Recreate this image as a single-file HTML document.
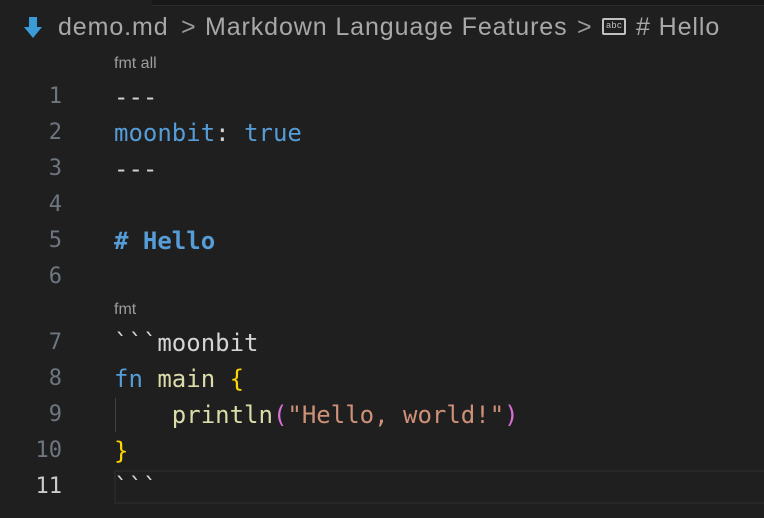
<!DOCTYPE html>
<html><head><meta charset="utf-8"><style>
html,body{margin:0;padding:0;}
body{width:764px;height:518px;background:#1f1f1f;position:relative;overflow:hidden;font-family:"Liberation Sans",sans-serif;}
.topbar{position:absolute;left:152px;top:0;width:612px;height:5px;background:#181818;border-bottom:1px solid #2b2b2b;}
.bc{position:absolute;top:12px;left:0;height:34px;font-size:25px;letter-spacing:0.9px;color:#a8a8a8;white-space:nowrap;}
.bc span{position:absolute;top:1px;}
.ln{position:absolute;left:0;width:62px;text-align:right;font-family:"DejaVu Sans Mono",monospace;font-size:22px;color:#6e7681;line-height:36px;}
.code{position:absolute;left:114px;font-family:"DejaVu Sans Mono",monospace;font-size:24px;line-height:36px;color:#d4d4d4;white-space:pre;}
.lens{position:absolute;left:114px;font-size:16px;color:#9d9d9d;}
.b{color:#569cd6}.y{color:#dcdcaa}.g{color:#ffd700}.p{color:#da70d6}.s{color:#ce9178}
</style></head><body>
<div class="topbar"></div>
<div class="bc">
<svg style="position:absolute;left:23px;top:4px" width="20" height="24" viewBox="0 0 20 24"><path d="M6 1h8v10h5l-9 11-9-11h5z" fill="#3b9bd9"/></svg>
<span style="left:58px">demo.md</span>
<span style="left:181px;color:#9a9a9a">&gt;</span>
<span style="left:205px">Markdown Language Features</span>
<span style="left:577px;color:#9a9a9a">&gt;</span>
<div style="position:absolute;left:602px;top:6px;width:24px;height:17px;border:2px solid #c0c0c0;border-radius:2px;box-sizing:border-box;font-size:9px;letter-spacing:0;color:#c0c0c0;text-align:center;line-height:13px;font-family:'Liberation Mono',monospace">abc</div>
<span style="left:636px">#&nbsp;Hello</span>
</div>
<div class="lens" style="top:55px">fmt all</div>
<div class="lens" style="top:301px">fmt</div>
<div class="ln" style="top:79px">1</div>
<div class="ln" style="top:115px">2</div>
<div class="ln" style="top:151px">3</div>
<div class="ln" style="top:187px">4</div>
<div class="ln" style="top:223px">5</div>
<div class="ln" style="top:259px">6</div>
<div class="ln" style="top:325px">7</div>
<div class="ln" style="top:361px">8</div>
<div class="ln" style="top:397px">9</div>
<div class="ln" style="top:433px">10</div>
<div class="ln" style="top:469px;color:#cccccc">11</div>
<div style="position:absolute;left:114px;top:470px;width:660px;height:34px;border:2px solid #282828;box-sizing:border-box"></div>
<div style="position:absolute;left:115px;top:398px;width:1px;height:34px;background:#404040"></div>
<div class="code" style="top:79px">---</div>
<div class="code" style="top:115px"><span class="b">moonbit</span>: <span class="b">true</span></div>
<div class="code" style="top:151px">---</div>
<div class="code" style="top:223px;font-weight:bold"><span class="b">#&nbsp;Hello</span></div>
<div class="code" style="top:325px">&#96;&#96;&#96;moonbit</div>
<div class="code" style="top:361px"><span class="b">fn</span> <span class="y">main</span> <span class="g">{</span></div>
<div class="code" style="top:397px">    <span class="y">println</span><span class="p">(</span><span class="s">"Hello, world!"</span><span class="p">)</span></div>
<div class="code" style="top:433px"><span class="g">}</span></div>
<div class="code" style="top:469px">&#96;&#96;&#96;</div>
</body></html>
